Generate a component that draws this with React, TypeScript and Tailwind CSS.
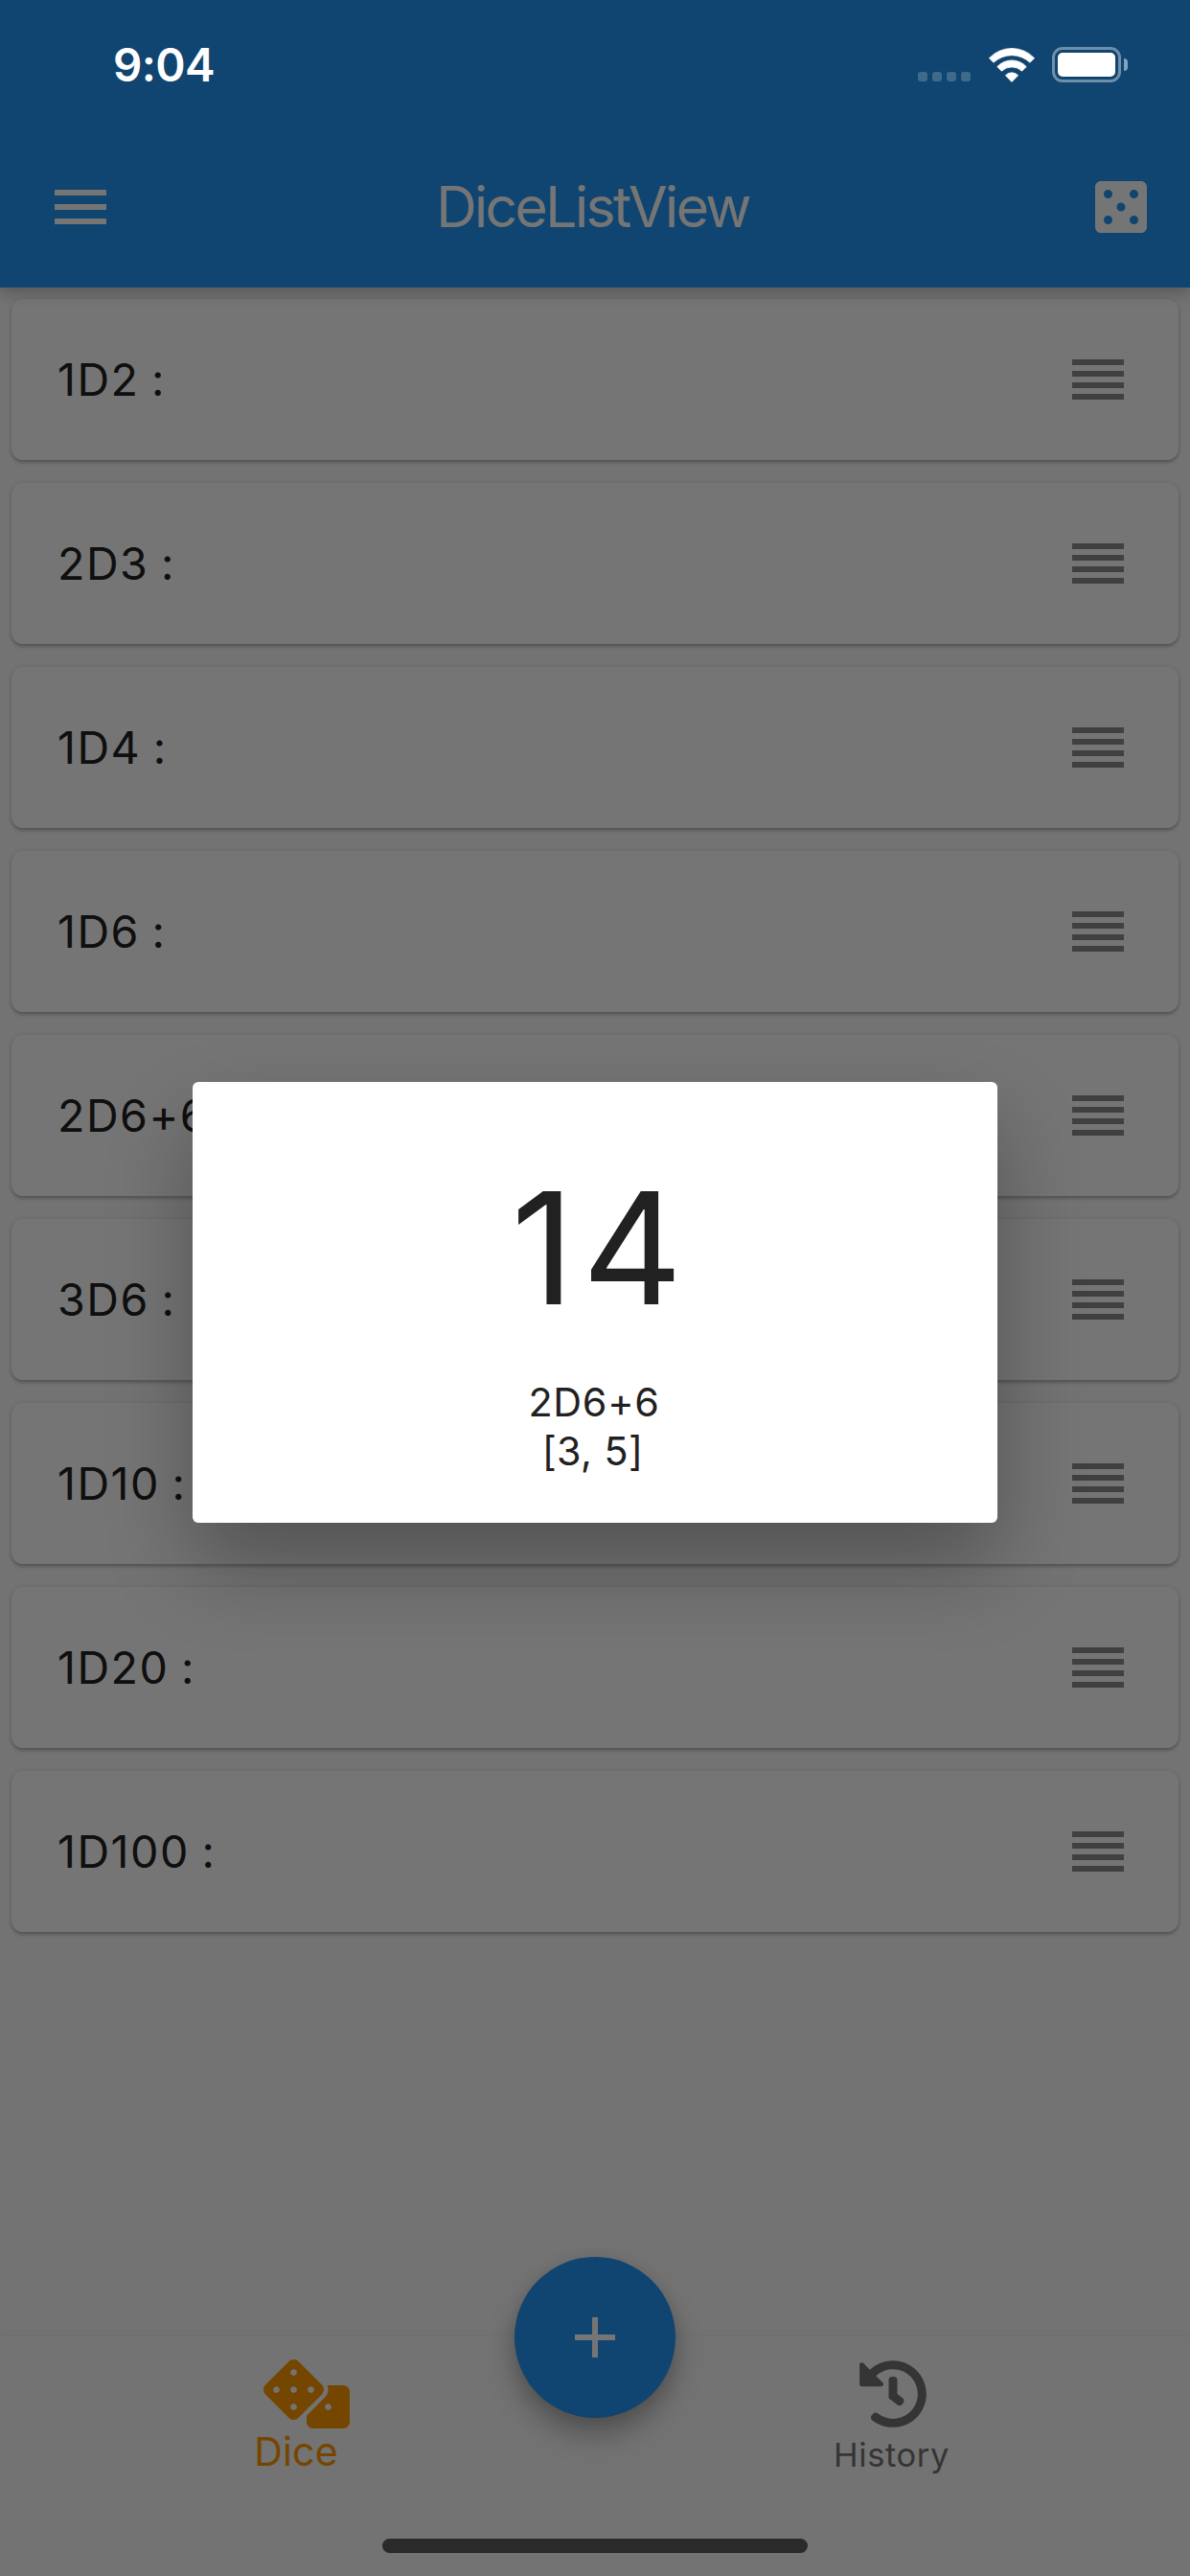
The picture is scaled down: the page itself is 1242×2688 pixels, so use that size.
import { FaDice, FaHistory } from "react-icons/fa";
import { MdAdd, MdCasino, MdMenu, MdReorder } from "react-icons/md";

const DICE = ["1D2", "2D3", "1D4", "1D6", "2D6+6", "3D6", "1D10", "1D20", "1D100"];

function WifiIcon() {
  return (
    <svg className="h-9 w-12" viewBox="0 0 48 36" fill="#fff" stroke="#fff" strokeWidth="0.8" strokeLinejoin="round">
      <path d="M0.4 10.7A32.3 32.3 0 0 1 47.6 10.7L43 15.2A27.8 27.8 0 0 0 5 15.2Z" />
      <path d="M8.8 19.6A20.6 20.6 0 0 1 39.2 19.6L34.6 24.2A15.2 15.2 0 0 0 13.4 24.2Z" />
      <path d="M17.4 28.7A9 9 0 0 1 30.6 28.7L24 35.4Z" />
    </svg>
  );
}

function BatteryIcon() {
  return (
    <div className="flex items-center gap-[3px]">
      <div className="h-[37px] w-[72px] rounded-[11px] border-[3px] border-white/40 p-[3px]">
        <div className="h-full w-full rounded-[5px] bg-white" />
      </div>
      <div className="h-[13px] w-1 rounded-r-full bg-white/50" />
    </div>
  );
}

function StatusBar() {
  return (
    <div className="absolute inset-x-0 top-0 z-20 flex h-[135px] items-center justify-between pr-[65px] pl-[118px] text-white">
      <span className="text-[47.5px] font-semibold tracking-[-0.6px]">9:04</span>
      <div className="flex items-center">
        <div className="mt-[25px] mr-[19px] flex gap-[5px]">
          {[0, 1, 2, 3].map((i) => (
            <span key={i} className="size-[10px] rounded-[3px] bg-white/20" />
          ))}
        </div>
        <div className="mr-[18px]">
          <WifiIcon />
        </div>
        <BatteryIcon />
      </div>
    </div>
  );
}

function AppBar() {
  return (
    <header className="relative z-10 h-[300px] bg-[#2196f3] pt-[132px] text-white shadow-[0_6px_12px_rgba(0,0,0,0.16),0_3px_24px_rgba(0,0,0,0.1)]">
      <div className="flex h-[168px] items-center justify-between px-9 pl-12">
        <MdMenu className="size-[72px]" />
        <h1 className="mr-[17px] text-[59px] tracking-[-2.7px]">DiceListView</h1>
        <MdCasino className="size-[72px]" />
      </div>
    </header>
  );
}

function DiceCard({ name }: { name: string }) {
  return (
    <li className="flex h-[168px] items-center justify-between rounded-xl bg-white px-12 shadow-[0_3px_3px_rgba(0,0,0,0.16),0_1px_5px_rgba(0,0,0,0.16)]">
      <span className="pt-[2px] text-[46.6px] tracking-[1.5px] text-[#212121] [word-spacing:-2px]">{name} :</span>
      <MdReorder className="size-[72px] text-black/45" />
    </li>
  );
}

function BottomBar() {
  return (
    <nav className="relative flex h-[250px] bg-[#fafafa] shadow-[0_0_3px_rgba(0,0,0,0.08),0_-3px_12px_rgba(0,0,0,0.02)]">
      <div className="flex flex-1 flex-col items-center pt-6 text-[#ff9800]">
        <div className="flex h-[72px] w-[72px]">
          <FaDice className="h-[72px] w-[90px] shrink-0" />
        </div>
        <span className="mr-[3px] text-[41px] leading-[48px] tracking-[0.2px]">Dice</span>
      </div>
      <div className="flex flex-1 flex-col items-center pt-6 text-[#757575]">
        <FaHistory className="size-[72px]" />
        <span className="mt-[7px] mr-[2px] text-[34.5px] leading-[42px] tracking-[0.6px]">History</span>
      </div>
      <button className="absolute top-[-83px] left-1/2 flex size-[168px] -translate-x-1/2 items-center justify-center rounded-full bg-[#2196f3] text-white shadow-[0_18px_30px_rgba(0,0,0,0.27),0_3px_18px_rgba(0,0,0,0.1)]">
        <MdAdd className="size-[72px]" />
      </button>
    </nav>
  );
}

function ResultDialog() {
  return (
    <div className="absolute inset-0 z-10 flex flex-col items-center bg-black/54 pt-[1129px]">
      <div className="flex h-[460px] w-[840px] flex-col items-center rounded-md bg-white pt-[71px] text-[#212121] shadow-[0_44px_88px_rgba(0,0,0,0.29)]">
        <p className="pl-3 text-[162.5px] leading-[204px] tracking-[7.9px]">14</p>
        <p className="mt-[34px] mr-[2px] text-[41.3px] leading-[51px] tracking-[0.7px]">2D6+6</p>
        <p className="mr-[5px] text-[41.3px] leading-[51px] tracking-[0.4px]">[3, 5]</p>
      </div>
    </div>
  );
}

export default function App() {
  return (
    <div className="relative flex h-[2688px] w-[1242px] flex-col overflow-hidden bg-[#fafafa] font-['Inter',sans-serif]">
      <StatusBar />
      <AppBar />
      <ul className="flex flex-1 flex-col gap-6 p-3">
        {DICE.map((name) => (
          <DiceCard key={name} name={name} />
        ))}
      </ul>
      <BottomBar />
      <ResultDialog />
      <div className="absolute bottom-6 left-1/2 z-20 h-[15px] w-[444px] -translate-x-1/2 rounded-full bg-[#2a2a2a]" />
    </div>
  );
}
